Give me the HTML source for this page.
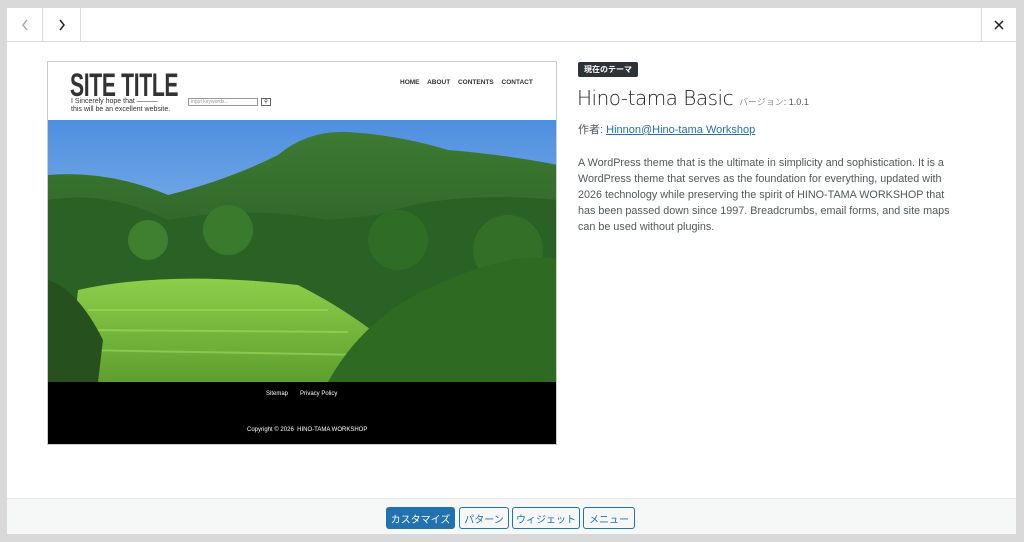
<!DOCTYPE html><html><head><meta charset="utf-8"><style>
*{margin:0;padding:0;box-sizing:border-box}
body{width:1024px;height:542px;background:#d9d9d9;font-family:"Liberation Sans","Noto Sans CJK JP",sans-serif;position:relative;overflow:hidden}
.modal{position:absolute;left:7px;top:8px;width:1009px;height:526px;background:#fff}
.hdr{position:absolute;left:0;top:0;width:100%;height:34px;border-bottom:1px solid #dcdcde}
.nb{position:absolute;top:0;height:33px;border-right:1px solid #dcdcde;text-align:center}
.ft{position:absolute;left:0;bottom:0;width:100%;height:36px;background:#f6f7f7;border-top:1px solid #e8e8e8}
.btn{position:absolute;top:8px;height:22px;border:1px solid #2271b1;border-radius:3px;font-size:10px;color:#2271b1;background:#f6f7f7;display:flex;align-items:center;justify-content:center}
.shot{position:absolute;left:40px;top:53px;width:510px;height:384px;border:1px solid #ccc;background:#fff;overflow:hidden}
</style></head><body>
<div class="modal">
<div class="hdr">
<div class="nb" style="left:0;width:36px"><svg width="36" height="33"><path d="M20 12 L16 17 L20 22" fill="none" stroke="#a7aaad" stroke-width="1.5"/></svg></div>
<div class="nb" style="left:36px;width:38px"><svg width="38" height="33"><path d="M17 12 L21 17 L17 22" fill="none" stroke="#1d2327" stroke-width="1.5"/></svg></div>
<div class="nb" style="left:974px;width:35px;border-right:none;border-left:1px solid #dcdcde"><svg width="35" height="33"><path d="M13 13 L21 21 M21 13 L13 21" stroke="#1d2327" stroke-width="1.5"/></svg></div>
</div>
<div class="shot">
<div style="position:absolute;left:22px;top:5px;font-weight:bold;font-size:32px;letter-spacing:-0.5px;color:#333;transform:scaleX(0.66);transform-origin:left;white-space:nowrap">SITE TITLE</div>
<div style="position:absolute;left:23px;top:36px;font-size:7px;line-height:7.5px;color:#333;white-space:nowrap">I Sincerely hope that ———<br>this will be an excellent website.</div>
<div style="position:absolute;left:140px;top:36px;width:70px;height:8px;border:1px solid #999;font-size:5px;color:#999;padding-left:2px;line-height:6px">input keywords...</div>
<div style="position:absolute;left:213px;top:36px;width:10px;height:8px;border:1px solid #666;font-size:5px;text-align:center;line-height:6px">&#9906;</div>
<div style="position:absolute;left:352px;top:17px;font-size:6.5px;font-weight:bold;color:#333;word-spacing:6px;white-space:nowrap">HOME ABOUT CONTENTS CONTACT</div>
<svg style="position:absolute;left:0;top:58px" width="510" height="262" viewBox="0 0 510 262">
<defs><linearGradient id="sk" x1="0" y1="0" x2="0" y2="1"><stop offset="0" stop-color="#4f8fe0"/><stop offset="1" stop-color="#b6d6f0"/></linearGradient>
<linearGradient id="g1" x1="0" y1="0" x2="0" y2="1"><stop offset="0" stop-color="#3d7a33"/><stop offset="1" stop-color="#1e4a1b"/></linearGradient>
<linearGradient id="g2" x1="0" y1="0" x2="0" y2="1"><stop offset="0" stop-color="#8ccf4a"/><stop offset="1" stop-color="#5e9f2e"/></linearGradient></defs>
<rect width="510" height="262" fill="url(#sk)"/>
<path d="M0 55 Q60 50 120 75 Q180 60 230 35 Q260 10 300 12 Q350 15 400 30 Q460 35 510 45 L510 262 L0 262Z" fill="url(#g1)"/>
<path d="M0 80 Q60 70 120 100 Q200 85 280 100 L330 95 Q400 70 510 80 L510 262 L0 262Z" fill="#2a6124"/>
<circle cx="180" cy="110" r="25" fill="#3a7a2c"/><circle cx="350" cy="120" r="30" fill="#2f6d27"/><circle cx="460" cy="130" r="35" fill="#346f28"/><circle cx="100" cy="120" r="20" fill="#3f7f30"/>
<path d="M20 262 L30 170 Q120 150 250 165 Q310 195 360 240 L380 262Z" fill="url(#g2)"/>
<path d="M40 190 L280 190 M35 210 L300 212 M30 230 L320 235" stroke="#9fdc5c" stroke-width="2" opacity=".6"/>
<path d="M280 262 Q320 190 400 160 Q470 130 510 140 L510 262Z" fill="#2f6a22"/>
<path d="M0 262 L0 160 Q30 170 55 220 L50 262Z" fill="#26501e"/>
</svg>
<div style="position:absolute;left:0;top:320px;width:510px;height:64px;background:#000;color:#fff;font-size:6px;white-space:nowrap">
<div style="position:absolute;left:218px;top:9px">Sitemap</div>
<div style="position:absolute;left:252px;top:9px">Privacy Policy</div>
<div style="position:absolute;left:199px;top:45px">Copyright © 2026 &nbsp;HINO-TAMA WORKSHOP</div>
</div>
</div>
<div style="position:absolute;left:571px;top:54px;background:#2c3338;color:#fff;font-size:8px;font-weight:bold;padding:2px 6px;border-radius:2px">現在のテーマ</div>
<div style="position:absolute;left:570px;top:78px;font-size:20px;color:#1d2327;white-space:nowrap;font-family:'DejaVu Sans','Liberation Sans',sans-serif;font-weight:200;letter-spacing:-0.5px">Hino-tama Basic <span style="font-size:9px;color:#50575e;font-family:'Liberation Sans','Noto Sans CJK JP',sans-serif;letter-spacing:0">バージョン: 1.0.1</span></div>
<div style="position:absolute;left:571px;top:113px;font-size:11px;color:#50575e">作者: <span style="color:#2271b1;text-decoration:underline">Hinnon@Hino-tama Workshop</span></div>
<div style="position:absolute;left:571px;top:147px;width:385px;font-size:10.8px;line-height:16px;color:#50575e">A WordPress theme that is the ultimate in simplicity and sophistication. It is a WordPress theme that serves as the foundation for everything, updated with 2026 technology while preserving the spirit of HINO-TAMA WORKSHOP that has been passed down since 1997. Breadcrumbs, email forms, and site maps can be used without plugins.</div>
<div class="ft">
<div class="btn" style="left:379px;width:69px;background:#2271b1;color:#fff">カスタマイズ</div>
<div class="btn" style="left:452px;width:50px">パターン</div>
<div class="btn" style="left:505px;width:68px">ウィジェット</div>
<div class="btn" style="left:576px;width:52px">メニュー</div>
</div>
</div>
</body></html>
